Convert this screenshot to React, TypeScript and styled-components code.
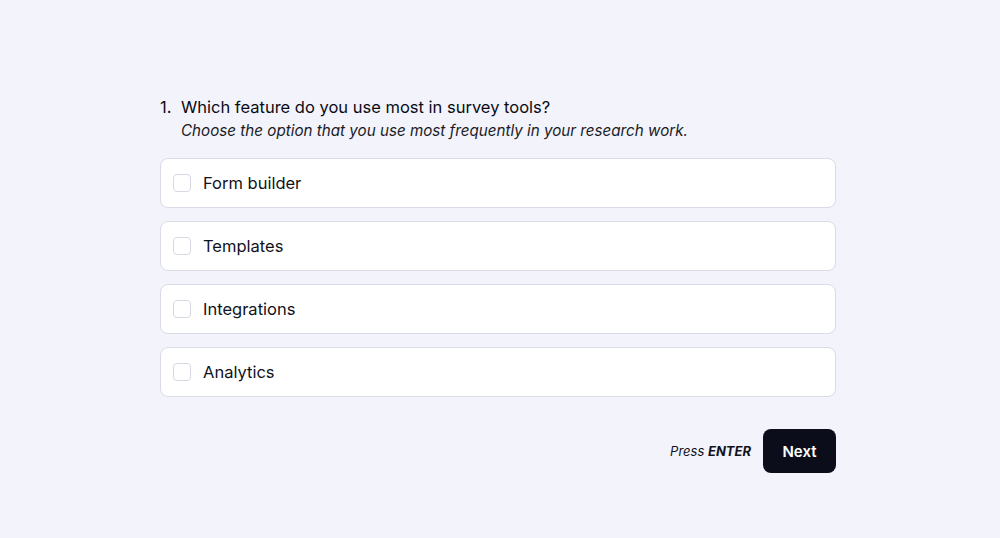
import styled, { createGlobalStyle } from "styled-components";

const GlobalStyle = createGlobalStyle`
  body {
    margin: 0;
    background: #f2f3fb;
    font-family: Inter, "Noto Sans", sans-serif;
    color: #0c0d17;
  }
`;

const options = ["Form builder", "Templates", "Integrations", "Analytics"];

const App = () => {
  return (
    <>
      <GlobalStyle />
      <Page>
        <Survey>
          <Question>
            <Number>1.</Number>
            <QuestionText>Which feature do you use most in survey tools?</QuestionText>
          </Question>
          <Hint>Choose the option that you use most frequently in your research work.</Hint>
          <OptionList>
            {options.map((item) => (
              <Option key={item}>
                <Box type="checkbox" />
                <span>{item}</span>
              </Option>
            ))}
          </OptionList>
          <Footer>
            <Press>
              Press <b>ENTER</b>
            </Press>
            <NextBtn>Next</NextBtn>
          </Footer>
        </Survey>
      </Page>
    </>
  );
};

const Page = styled.div`
  height: 538px;
  display: flex;
  justify-content: center;
  padding: 96px 4px 0 0;
  box-sizing: border-box;
`;

const Survey = styled.div`
  width: 676px;
  display: flex;
  flex-direction: column;
`;

const Question = styled.div`
  display: flex;
  font-size: 16.5px;
  font-weight: 400;
  line-height: 22px;
  color: #0a0b14;
`;

const Number = styled.span`
  width: 21px;
`;

const QuestionText = styled.span``;

const Hint = styled.div`
  margin: 3px 0 0 21px;
  font-size: 15.2px;
  font-style: italic;
  line-height: 20px;
  color: #1a1b24;
`;

const OptionList = styled.div`
  margin-top: 17px;
  display: flex;
  flex-direction: column;
  gap: 13px;
`;

const Option = styled.label`
  height: 50px;
  box-sizing: border-box;
  display: flex;
  align-items: center;
  gap: 12px;
  padding: 0 12px;
  background: #fff;
  border: 1px solid #d9dbe6;
  border-radius: 8px;
  font-size: 16.5px;
  color: #11121b;
  cursor: pointer;
`;

const Box = styled.input`
  appearance: none;
  margin: 0;
  width: 18px;
  height: 18px;
  border: 1px solid #d6d8e2;
  border-radius: 4px;
  background: #fff;
`;

const Footer = styled.div`
  margin-top: 32px;
  display: flex;
  justify-content: flex-end;
  align-items: center;
  gap: 12px;
`;

const Press = styled.span`
  font-size: 13px;
  font-style: italic;
  color: #11121b;
  b {
    font-weight: 700;
  }
`;

const NextBtn = styled.button`
  width: 73px;
  height: 44px;
  border: none;
  border-radius: 8px;
  background: #0b0d1b;
  color: #fff;
  font-family: Inter, sans-serif;
  font-size: 15px;
  font-weight: 600;
  cursor: pointer;
`;

export default App;
